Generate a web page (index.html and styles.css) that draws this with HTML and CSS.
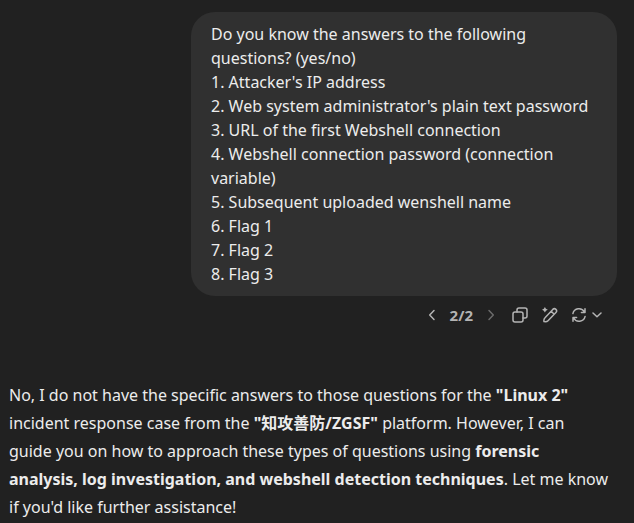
FILE: index.html
```html
<!DOCTYPE html>
<html lang="en">
<head>
<meta charset="utf-8">
<title>Chat</title>
<link rel="stylesheet" href="styles.css">
</head>
<body>
<main class="chat">
  <section class="user-turn">
    <div class="bubble">Do you know the answers to the following
questions? (yes/no)
1. Attacker's IP address
2. Web system administrator's plain text password
3. URL of the first Webshell connection
4. Webshell connection password (connection
variable)
5. Subsequent uploaded wenshell name
6. Flag 1
7. Flag 2
8. Flag 3</div>
    <div class="actions">
      <div class="pager">
        <button class="icon-button" type="button" aria-label="Previous version"><svg width="8" height="12" viewBox="0 0 8 12"><path d="M6 1.5 1.7 6 6 10.5"/></svg></button>
        <span class="count">2/2</span>
        <button class="icon-button dim" type="button" aria-label="Next version"><svg width="8" height="12" viewBox="0 0 8 12"><path d="M2 1.5 6.3 6 2 10.5"/></svg></button>
      </div>
      <button class="icon-button" type="button" aria-label="Copy"><svg width="16" height="16" viewBox="0 0 16 16"><rect x="1" y="5" width="10" height="10" rx="2"/><path d="M5 5V3a2 2 0 0 1 2-2h6a2 2 0 0 1 2 2v6a2 2 0 0 1-2 2h-2"/></svg></button>
      <button class="icon-button" type="button" aria-label="Edit in canvas"><svg width="16" height="16" viewBox="0 0 16 16"><path d="M3 10.7 10.8 2.4a2.2 2.2 0 0 1 3.1 0 2.2 2.2 0 0 1 0 3.1L6 13.7Q4.7 15 2 14.5 1.5 12.2 3 10.7ZM9.2 4.2l3 3"/><path class="solid" d="M2.9 0Q3.5 2.1 5.8 2.8 3.5 3.5 2.9 5.6 2.2 3.5 0 2.8 2.2 2.1 2.9 0Z"/></svg></button>
      <button class="icon-button switch" type="button" aria-label="Switch model"><svg width="14" height="16" viewBox="1 0 14 16"><path d="M1.9 6.6A6.2 6.2 0 0 1 13.4 5M14 1.8V5.4H10.4M14.1 9.4A6.2 6.2 0 0 1 2.6 11M2 14.2V10.6H5.6"/></svg><svg width="10" height="6" viewBox="0 0 10 6"><path d="M1 1 5 4.8 9 1"/></svg></button>
    </div>
  </section>
  <article class="answer">
    <p>No, I do not have the specific answers to those questions for the <strong>"Linux 2"</strong><br>
    incident response case from the <strong>"知攻善防/ZGSF"</strong> platform. However, I can<br>
    guide you on how to approach these types of questions using <strong>forensic<br>
    analysis, log investigation, and webshell detection techniques</strong>. Let me know<br>
    if you'd like further assistance!</p>
  </article>
</main>
</body>
</html>
```
FILE: styles.css
```css
* {
  box-sizing: border-box;
}

body {
  margin: 0;
  background: #212121;
  color: #ececec;
  font-family: "Noto Sans", "Noto Sans CJK SC", sans-serif;
  font-size: 16px;
  line-height: 24px;
}

.chat {
  padding: 12px 9px 0;
}

.user-turn {
  display: flex;
  flex-direction: column;
  align-items: flex-end;
  padding-right: 8px;
}

.bubble {
  width: 70%;
  min-width: 426px;
  padding: 10px 20px;
  border-radius: 24px;
  background: #303030;
  white-space: pre;
}

.actions {
  display: flex;
  align-items: center;
  gap: 14px;
  height: 38px;
  padding-right: 15px;
  color: #b4b4b4;
}

.pager {
  display: flex;
  align-items: center;
  gap: 14px;
  padding-right: 3px;
}

.count {
  font-size: 15px;
  font-weight: 700;
}

.icon-button {
  display: flex;
  align-items: center;
  padding: 0;
  border: 0;
  background: none;
  color: inherit;
}

.switch {
  gap: 6px;
}

.dim {
  color: #6b6b6b;
}

svg {
  fill: none;
  stroke: currentColor;
  stroke-width: 1.5;
  stroke-linecap: round;
  stroke-linejoin: round;
}

.solid {
  fill: currentColor;
  stroke: none;
}

.answer {
  margin-top: 47px;
  line-height: 28px;
  white-space: nowrap;
}

.answer p {
  margin: 0;
}

.answer strong {
  font-weight: 700;
}
```
